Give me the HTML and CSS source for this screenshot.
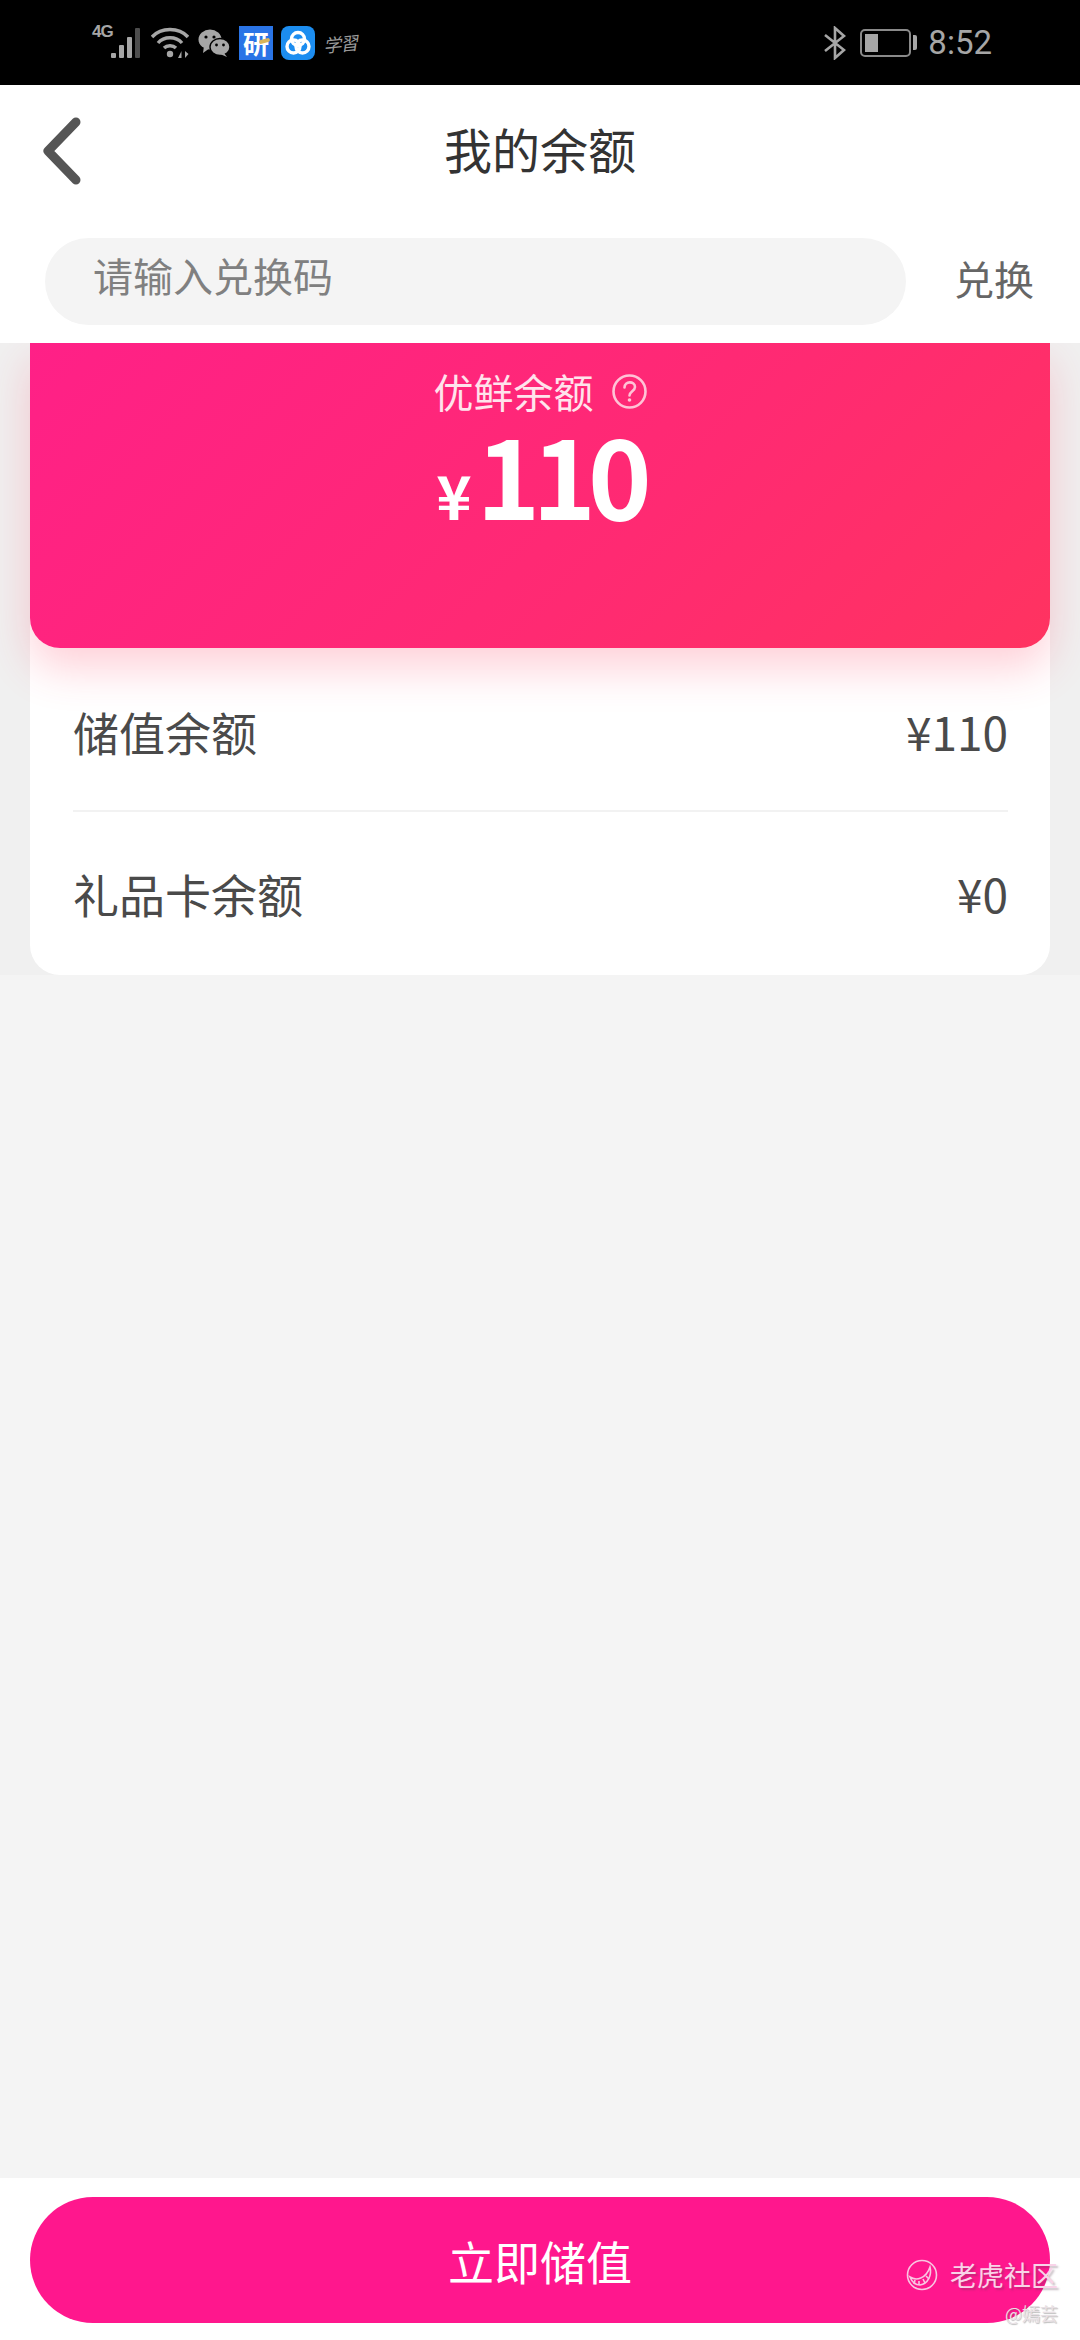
FILE: index.html
```html
<!DOCTYPE html>
<html lang="zh-CN">
<head>
  <meta charset="UTF-8" />
  <meta name="viewport" content="width=device-width, initial-scale=1" />
  <title>我的余额</title>
  <link rel="stylesheet" href="styles.css">
</head>
<body>

<div class="page">
  <div class="status-bar">
    <div class="status-left">
      <span class="net">4G</span>
      <svg class="signal" width="32" height="32" viewBox="0 0 32 32">
        <rect x="0" y="26" width="5" height="5" rx="1" fill="#a6a6a6"/>
        <rect x="8" y="18" width="5" height="13" rx="1" fill="#a6a6a6"/>
        <rect x="16" y="10" width="5" height="21" rx="1" fill="#a6a6a6"/>
        <rect x="24" y="1" width="5" height="30" rx="1" fill="#4d4d4d"/>
      </svg>
      <svg class="wifi" width="38" height="32" viewBox="0 0 38 32" fill="none" stroke="#a6a6a6" stroke-width="3.4">
        <path d="M1 10 C10 0 28 0 37 10"/>
        <path d="M7 16 C13 9 25 9 31 16"/>
        <path d="M13 21 C16 18 22 18 25 21"/>
        <circle cx="19" cy="27" r="3.2" fill="#a6a6a6" stroke="none"/>
        <path d="M27 31 L30.5 24 V31 Z M34 24 V31 L37.5 27 Z" fill="#a6a6a6" stroke="none"/>
      </svg>
      <svg class="wechat" width="32" height="28" viewBox="0 0 32 28">
        <ellipse cx="12" cy="10.5" rx="11.5" ry="10" fill="#a6a6a6"/>
        <path d="M6 17 L5 24 L12 19 Z" fill="#a6a6a6"/>
        <circle cx="8" cy="8" r="1.6" fill="#000"/>
        <circle cx="16" cy="8" r="1.6" fill="#000"/>
        <ellipse cx="22" cy="18" rx="10" ry="8.5" fill="#a6a6a6" stroke="#000" stroke-width="1.4"/>
        <path d="M26 24 L29 28 L22 25 Z" fill="#a6a6a6"/>
        <circle cx="18.5" cy="16" r="1.4" fill="#000"/>
        <circle cx="25.5" cy="16" r="1.4" fill="#000"/>
      </svg>
      <span class="tile-yan">研</span>
      <svg class="tile-blue" width="34" height="34" viewBox="0 0 34 34" fill="none">
        <rect width="34" height="34" rx="8" fill="#1c8df0"/>
        <g stroke="#fff" stroke-width="3.4">
          <circle cx="17" cy="13" r="6.5"/>
          <circle cx="12.5" cy="20.5" r="6.5"/>
          <circle cx="21.5" cy="20.5" r="6.5"/>
        </g>
      </svg>
      <span class="study">学習</span>
    </div>
    <div class="status-right">
      <svg class="bt" width="22" height="34" viewBox="0 0 22 34" fill="none" stroke="#a6a6a6" stroke-width="2.6">
        <path d="M1 9 L20 24 L11 32 V2 L20 10 L1 25"/>
      </svg>
      <div class="battery"><span class="battery-level"></span></div>
      <span class="battery-cap"></span>
      <span class="time">8:52</span>
    </div>
  </div>

  <div class="nav">
    <svg class="back" width="44" height="72" viewBox="0 0 44 72" fill="none">
      <path d="M36 7 L8 36 L36 65" stroke="#555" stroke-width="9" stroke-linecap="round" stroke-linejoin="round"/>
    </svg>
    <div class="nav-title">我的余额</div>
  </div>

  <div class="redeem">
    <div class="redeem-input">请输入兑换码</div>
    <div class="redeem-btn">兑换</div>
  </div>

  <div class="balance">
    <div class="card">
      <div class="hero">
        <div class="hero-label">
          <span>优鲜余额</span>
          <svg width="35" height="35" viewBox="0 0 35 35" fill="none" stroke="#ffc3d6" stroke-width="2.6">
            <circle cx="17.5" cy="17.5" r="16"/>
            <path d="M12.5 13.5 C12.5 6.5 23 7 23 13 C23 17 17.5 17.5 17.5 21.5" stroke-linecap="round"/>
            <circle cx="17.5" cy="26" r="1.8" fill="#ffc3d6" stroke="none"/>
          </svg>
        </div>
        <div class="hero-amount"><span class="yen">¥</span><span class="num">110</span></div>
      </div>
      <div class="row row-line">
        <span>储值余额</span>
        <span>¥110</span>
      </div>
      <div class="row row-last">
        <span>礼品卡余额</span>
        <span>¥0</span>
      </div>
    </div>
  </div>

  <div class="blank"></div>

  <div class="footer">
    <button class="charge-btn">立即储值</button>
  </div>

  <!-- 水印 -->
  <div class="watermark">
    <div class="wm-top">
      <svg width="32" height="32" viewBox="0 0 32 32" fill="none" stroke="#f9c6e2" stroke-width="1.6">
        <circle cx="16" cy="16" r="14.5"/>
        <path d="M4 18 C10 22 20 20 24 8 C26 16 22 25 14 26 C9 26 6 23 4 18 Z"/>
        <path d="M9 21 L8 25 M13 22 L13 26 M17 20 L19 24 M20 17 L23 20"/>
      </svg>
      <span class="wm-name">老虎社区</span>
    </div>
    <div class="wm-author">@嫣芸</div>
  </div>
</div>

</body>
</html>
```

FILE: styles.css
```css
* {
  margin: 0; padding: 0; box-sizing: border-box;
  font-family: 'Noto Sans CJK SC', 'Noto Sans', sans-serif;
}
body {
  background-color: #f4f4f4;
}
.page {
  position: relative;
  width: 1080px;
  height: 2340px;
  display: flex;
  flex-direction: column;
  overflow: hidden;
}

/* status bar */
.status-bar {
  height: 85px;
  background: #000;
  display: flex;
  justify-content: space-between;
  align-items: center;
  padding: 0 88px 0 92px;
  flex-shrink: 0;
}
.status-left {
  display: flex;
  align-items: center;
  height: 100%;
}
.net {
  font-family: 'Liberation Sans', sans-serif;
  font-size: 17px;
  font-weight: bold;
  color: #a6a6a6;
  width: 19px;
  margin-top: -22px;
  letter-spacing: -1px;
}
.signal {
  margin-top: 1px;
}
.wifi {
  margin-left: 8px;
  margin-top: 1px;
}
.wechat {
  margin-left: 9px;
  margin-top: 1px;
}
.tile-yan {
  position: relative;
  width: 34px;
  height: 34px;
  margin-left: 9px;
  background: #2a74e6;
  color: #fff;
  font-size: 26px;
  font-weight: bold;
  line-height: 34px;
  text-align: center;
}
.tile-yan::after {
  content: "";
  position: absolute;
  right: 3px;
  top: 13px;
  width: 11px;
  height: 4px;
  background: #d9b45a;
  border-radius: 2px;
  transform: rotate(-15deg);
}
.tile-blue {
  margin-left: 8px;
}
.study {
  margin-left: 8px;
  width: 36px;
  font-size: 18px;
  line-height: 1;
  letter-spacing: -1px;
  font-style: italic;
  color: #9a9a9a;
  white-space: nowrap;
  transform: rotate(-6deg);
}
.status-right {
  display: flex;
  align-items: center;
}
.battery {
  width: 51px;
  height: 28px;
  margin-left: 14px;
  border: 2px solid #8a8a8a;
  border-radius: 5px;
  padding: 3px;
}
.battery-level {
  display: block;
  width: 13px;
  height: 100%;
  background: #a6a6a6;
}
.battery-cap {
  width: 4px;
  height: 15px;
  margin-left: 2px;
  background: #a6a6a6;
  border-radius: 0 2px 2px 0;
}
.time {
  margin-left: 11px;
  font-family: Roboto, sans-serif;
  font-size: 33px;
  color: #a6a6a6;
}

/* nav */
.nav {
  height: 140px;
  background: #fff;
  display: grid;
  grid-template-columns: 1fr auto 1fr;
  align-items: center;
  flex-shrink: 0;
}
.back {
  margin-left: 40px;
  margin-top: -8px;
}
.nav-title {
  font-size: 48px;
  color: #333;
  margin-top: -14px;
}

/* redeem row */
.redeem {
  height: 118px;
  background: #fff;
  display: flex;
  align-items: flex-start;
  padding: 13px 46px 0 45px;
  flex-shrink: 0;
  position: relative;
  z-index: 1;
}
.redeem-input {
  width: 861px;
  height: 87px;
  background: #f4f4f4;
  border-radius: 44px;
  padding-left: 48px;
  font-size: 40px;
  line-height: 75px;
  color: #808080;
}
.redeem-btn {
  margin-left: auto;
  font-size: 40px;
  line-height: 81px;
  color: #666;
}

/* balance */
.balance {
  height: 632px;
  background: #f0f0f0;
  padding: 0 30px;
  overflow: hidden;
  flex-shrink: 0;
}
.card {
  height: 632px;
  background: #fff;
  border-radius: 0 0 30px 30px;
}
.hero {
  height: 305px;
  background: linear-gradient(135deg, #ff2087 0%, #ff2a72 60%, #ff3360 100%);
  border-radius: 0 0 30px 30px;
  box-shadow: 0 20px 44px rgba(255, 60, 90, 0.24);
  display: flex;
  flex-direction: column;
  align-items: center;
  color: #fff;
  position: relative;
}
.hero-label {
  display: flex;
  align-items: center;
  gap: 18px;
  height: 58px;
  margin-top: 19px;
  font-size: 40px;
  color: #ffe3ec;
}
.hero-amount {
  display: flex;
  align-items: baseline;
  height: 100px;
  line-height: 100px;
  font-weight: bold;
  margin-top: 3px;
}
.yen {
  font-size: 60px;
  margin-right: 5px;
}
.num {
  font-size: 108px;
  letter-spacing: -8px;
}
.row {
  height: 164px;
  margin: 0 42px 0 43px;
  display: flex;
  justify-content: space-between;
  align-items: center;
  padding-top: 3px;
  font-size: 46px;
  color: #4a4a4a;
}
.row-line {
  border-bottom: 2px solid #f2f2f2;
}
.row-last {
  padding-top: 0;
  padding-bottom: 3px;
}

.blank {
  flex: 1;
}

/* footer */
.footer {
  height: 162px;
  background: #fff;
  padding: 19px 30px 0;
  flex-shrink: 0;
}
.charge-btn {
  width: 100%;
  height: 126px;
  border: none;
  border-radius: 63px;
  background-color: #ff178d;
  color: #fff;
  font-size: 46px;
}

/* watermark */
.watermark {
  position: absolute;
  right: 22px;
  bottom: 15px;
  display: flex;
  flex-direction: column;
  align-items: flex-end;
}
.wm-top {
  display: flex;
  align-items: center;
  gap: 12px;
}
.wm-name {
  font-size: 27px;
  line-height: 40px;
  color: #f9d3e8;
  text-shadow: 2px 2px 2px rgba(90, 60, 80, 0.35);
}
.wm-author {
  margin-top: 6px;
  font-size: 18px;
  line-height: 24px;
  color: #e8e0e4;
  text-shadow: 1px 1px 1px rgba(90, 90, 90, 0.4);
}
```
